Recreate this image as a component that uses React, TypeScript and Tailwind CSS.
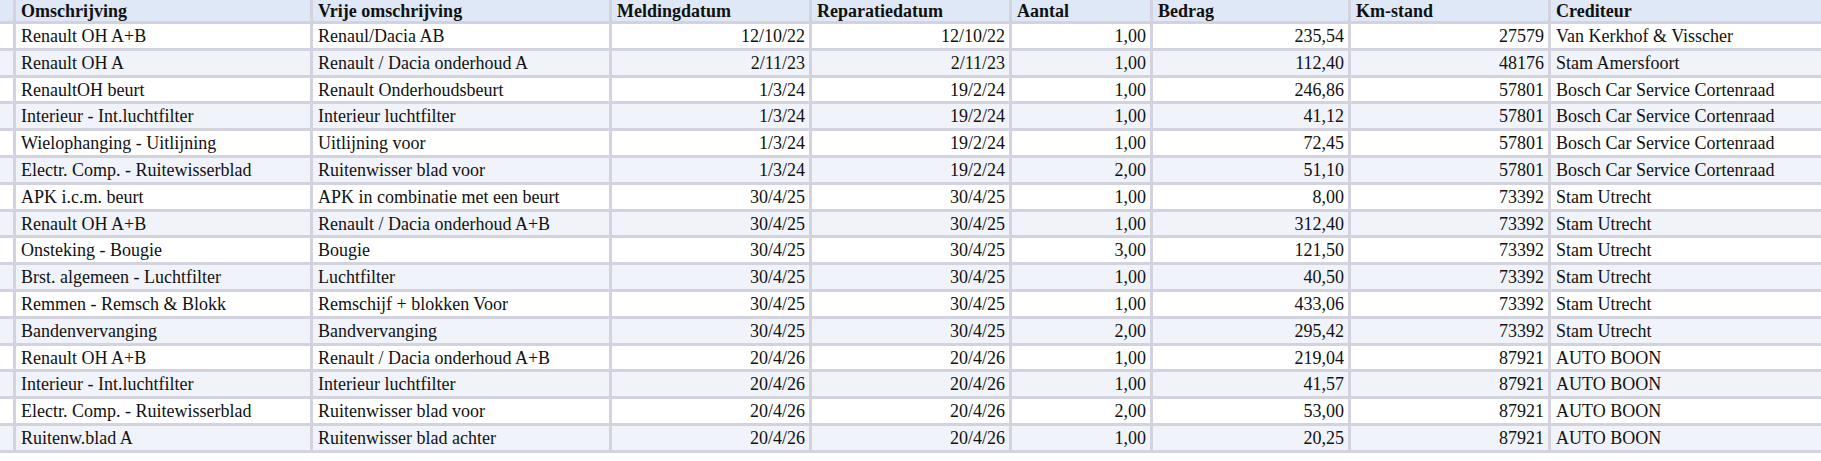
import React from 'react';

type Row = {
  oms: string;
  vrij: string;
  melding: string;
  reparatie: string;
  aantal: string;
  bedrag: string;
  km: string;
  crediteur: string;
};

const rows: Row[] = [
  { oms: 'Renault OH A+B', vrij: 'Renaul/Dacia AB', melding: '12/10/22', reparatie: '12/10/22', aantal: '1,00', bedrag: '235,54', km: '27579', crediteur: 'Van Kerkhof & Visscher' },
  { oms: 'Renault OH A', vrij: 'Renault / Dacia onderhoud A', melding: '2/11/23', reparatie: '2/11/23', aantal: '1,00', bedrag: '112,40', km: '48176', crediteur: 'Stam Amersfoort' },
  { oms: 'RenaultOH beurt', vrij: 'Renault Onderhoudsbeurt', melding: '1/3/24', reparatie: '19/2/24', aantal: '1,00', bedrag: '246,86', km: '57801', crediteur: 'Bosch Car Service Cortenraad' },
  { oms: 'Interieur - Int.luchtfilter', vrij: 'Interieur luchtfilter', melding: '1/3/24', reparatie: '19/2/24', aantal: '1,00', bedrag: '41,12', km: '57801', crediteur: 'Bosch Car Service Cortenraad' },
  { oms: 'Wielophanging - Uitlijning', vrij: 'Uitlijning voor', melding: '1/3/24', reparatie: '19/2/24', aantal: '1,00', bedrag: '72,45', km: '57801', crediteur: 'Bosch Car Service Cortenraad' },
  { oms: 'Electr. Comp. - Ruitewisserblad', vrij: 'Ruitenwisser blad voor', melding: '1/3/24', reparatie: '19/2/24', aantal: '2,00', bedrag: '51,10', km: '57801', crediteur: 'Bosch Car Service Cortenraad' },
  { oms: 'APK i.c.m. beurt', vrij: 'APK in combinatie met een beurt', melding: '30/4/25', reparatie: '30/4/25', aantal: '1,00', bedrag: '8,00', km: '73392', crediteur: 'Stam Utrecht' },
  { oms: 'Renault OH A+B', vrij: 'Renault / Dacia onderhoud A+B', melding: '30/4/25', reparatie: '30/4/25', aantal: '1,00', bedrag: '312,40', km: '73392', crediteur: 'Stam Utrecht' },
  { oms: 'Onsteking - Bougie', vrij: 'Bougie', melding: '30/4/25', reparatie: '30/4/25', aantal: '3,00', bedrag: '121,50', km: '73392', crediteur: 'Stam Utrecht' },
  { oms: 'Brst. algemeen - Luchtfilter', vrij: 'Luchtfilter', melding: '30/4/25', reparatie: '30/4/25', aantal: '1,00', bedrag: '40,50', km: '73392', crediteur: 'Stam Utrecht' },
  { oms: 'Remmen - Remsch & Blokk', vrij: 'Remschijf + blokken Voor', melding: '30/4/25', reparatie: '30/4/25', aantal: '1,00', bedrag: '433,06', km: '73392', crediteur: 'Stam Utrecht' },
  { oms: 'Bandenvervanging', vrij: 'Bandvervanging', melding: '30/4/25', reparatie: '30/4/25', aantal: '2,00', bedrag: '295,42', km: '73392', crediteur: 'Stam Utrecht' },
  { oms: 'Renault OH A+B', vrij: 'Renault / Dacia onderhoud A+B', melding: '20/4/26', reparatie: '20/4/26', aantal: '1,00', bedrag: '219,04', km: '87921', crediteur: 'AUTO BOON' },
  { oms: 'Interieur - Int.luchtfilter', vrij: 'Interieur luchtfilter', melding: '20/4/26', reparatie: '20/4/26', aantal: '1,00', bedrag: '41,57', km: '87921', crediteur: 'AUTO BOON' },
  { oms: 'Electr. Comp. - Ruitewisserblad', vrij: 'Ruitenwisser blad voor', melding: '20/4/26', reparatie: '20/4/26', aantal: '2,00', bedrag: '53,00', km: '87921', crediteur: 'AUTO BOON' },
  { oms: 'Ruitenw.blad A', vrij: 'Ruitenwisser blad achter', melding: '20/4/26', reparatie: '20/4/26', aantal: '1,00', bedrag: '20,25', km: '87921', crediteur: 'AUTO BOON' },
];

const headers = ['', 'Omschrijving', 'Vrije omschrijving', 'Meldingdatum', 'Reparatiedatum', 'Aantal', 'Bedrag', 'Km-stand', 'Crediteur'];

const App: React.FC = () => {
  return (
    <div className="w-[1821px] h-[461px] bg-white overflow-hidden font-['Liberation_Serif',serif] text-[18px] text-[#111]">
      <div className="grid grid-cols-[13px_294px_296px_197px_197px_138px_195px_197px_1fr] grid-rows-[21px] auto-rows-[23.8px] gap-[3px] bg-[#d3d3df] pb-[3px] leading-[24px]">
        {headers.map((h, i) => (
          <div key={i} className="bg-[#dee8f6] px-[5px] pt-[1px] font-bold leading-[21px] whitespace-nowrap">
            {h}
          </div>
        ))}
        {rows.map((r, idx) => {
          const bg = idx % 2 === 0 ? 'bg-white' : 'bg-[#f1f3fa]';
          return (
            <React.Fragment key={idx}>
              <div className={bg} />
              <div className={`${bg} px-[5px] whitespace-nowrap overflow-hidden`}>{r.oms}</div>
              <div className={`${bg} px-[5px] whitespace-nowrap overflow-hidden`}>{r.vrij}</div>
              <div className={`${bg} px-[4px] text-right whitespace-nowrap`}>{r.melding}</div>
              <div className={`${bg} px-[4px] text-right whitespace-nowrap`}>{r.reparatie}</div>
              <div className={`${bg} px-[4px] text-right whitespace-nowrap`}>{r.aantal}</div>
              <div className={`${bg} px-[4px] text-right whitespace-nowrap`}>{r.bedrag}</div>
              <div className={`${bg} px-[4px] text-right whitespace-nowrap`}>{r.km}</div>
              <div className={`${bg} px-[5px] whitespace-nowrap overflow-hidden`}>{r.crediteur}</div>
            </React.Fragment>
          );
        })}
      </div>
    </div>
  );
};

export default App;
